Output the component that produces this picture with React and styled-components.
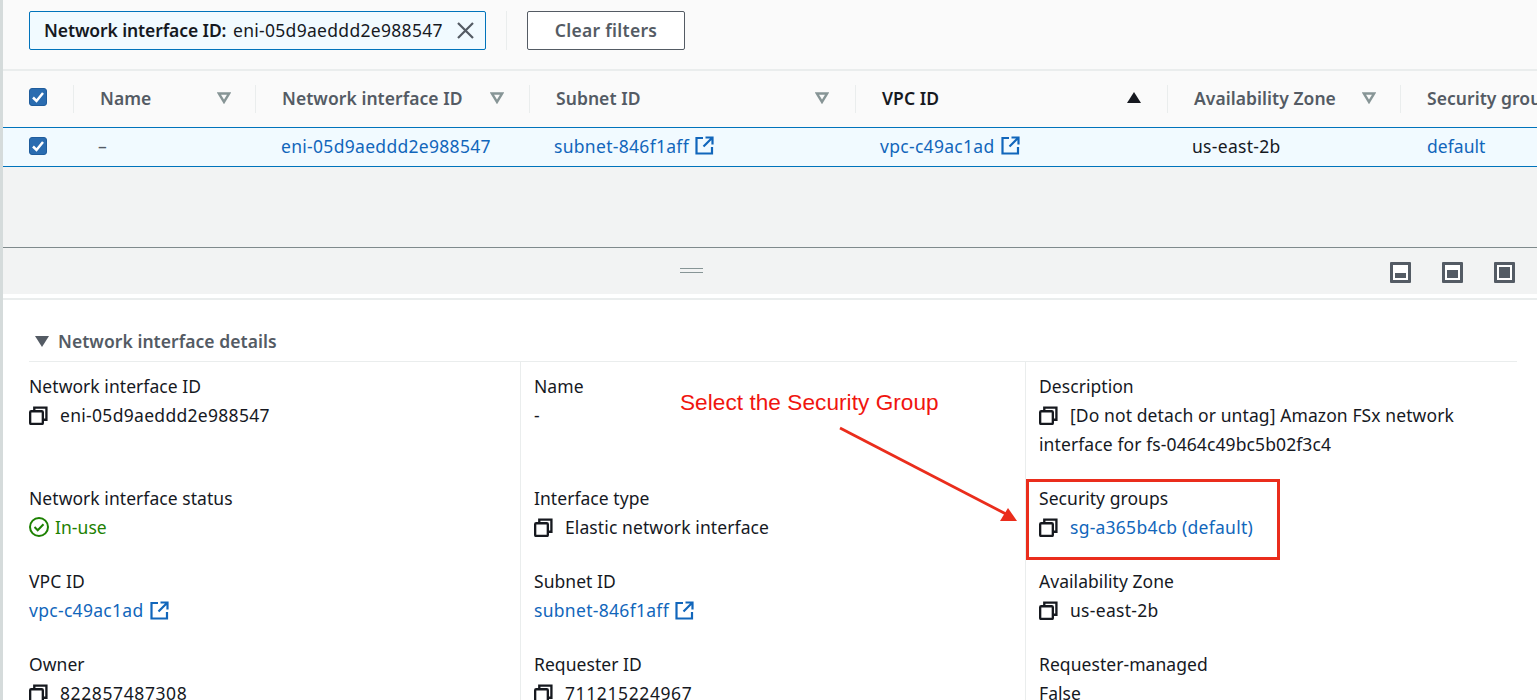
import styled, { createGlobalStyle } from "styled-components";

const GlobalStyle = createGlobalStyle`
  html, body {
    margin: 0;
    padding: 0;
    background: #fff;
  }
  * {
    box-sizing: border-box;
  }
`;

const Page = styled.div`
  position: relative;
  width: 1537px;
  height: 700px;
  overflow: hidden;
  border-left: 3px solid #d5dbdb;
  background: #fff;
  color: #16191f;
  font-family: "Noto Sans", "Open Sans", sans-serif;
  font-size: 17.5px;
  letter-spacing: 0.05px;
`;

const FilterBar = styled.div`
  height: 71px;
  padding: 0 0 9px 26px;
  display: flex;
  align-items: center;
  background: #fafafa;
  border-bottom: 2px solid #eaeded;
`;

const Token = styled.div`
  width: 457px;
  height: 39px;
  padding: 0 10px 0 14px;
  display: flex;
  align-items: center;
  justify-content: space-between;
  background: #f1faff;
  border: 1px solid #0073bb;
  border-radius: 2px;
  white-space: nowrap;
  b {
    font-weight: 600;
    margin-right: 2px;
    letter-spacing: -0.1px;
  }
`;

const FilterDivider = styled.div`
  width: 1px;
  height: 39px;
  margin: 0 20px;
  background: #eaeded;
`;

const ClearButton = styled.button`
  width: 158px;
  height: 39px;
  padding: 0;
  background: #fff;
  border: 1px solid #545b64;
  border-radius: 2px;
  color: #545b64;
  font: 600 17.5px "Noto Sans", sans-serif;
  letter-spacing: 0.3px;
`;

const columns = "70px 182px 274px 326px 312px 233px 1fr";

const HeaderRow = styled.div`
  height: 56px;
  display: grid;
  grid-template-columns: ${columns};
  background: #fafafa;
  align-items: center;
`;

const HeadCell = styled.div`
  height: 28px;
  padding: 0 ${(p) => p.$right ?? 24}px 3px 26px;
  display: flex;
  align-items: center;
  justify-content: space-between;
  border-left: 1px solid #eaeded;
  color: ${(p) => (p.$active ? "#16191f" : "#545b64")};
  font-weight: 600;
  white-space: nowrap;
  overflow: ${(p) => (p.$clip ? "hidden" : "visible")};
`;

const HeadCheck = styled.div`
  padding-bottom: 4px;
`;

const DataRow = styled.div`
  height: 40px;
  padding-bottom: 3px;
  display: grid;
  grid-template-columns: ${columns};
  align-items: center;
  background: #f1faff;
  border-top: 1px solid #0073bb;
  border-bottom: 1px solid #0073bb;
  box-shadow: 0 1px 1px #879596;
  white-space: nowrap;
`;

const DataCell = styled.div`
  padding-left: ${(p) => p.$left ?? 25}px;
  display: flex;
  align-items: center;
  gap: 6px;
  color: ${(p) => (p.$muted ? "#545b64" : "inherit")};
`;

const CheckBox = styled.span`
  margin-left: 26px;
  width: 18px;
  height: 18px;
  display: flex;
  align-items: center;
  justify-content: center;
  background: #2a6cb0;
  border: 1px solid #1f5c9c;
  border-radius: 3px;
`;

const Link = styled.a`
  display: inline-flex;
  align-items: center;
  gap: 6px;
  color: #1166bb;
`;

const Id = styled.span`
  letter-spacing: ${(p) => p.$sp ?? 0.3}px;
`;

const EmptyArea = styled.div`
  height: 81px;
  background: #f2f3f3;
  border-bottom: 1px solid #7f8a8c;
`;

const SplitBar = styled.div`
  position: relative;
  height: 46px;
  margin-bottom: 4px;
  padding: 3px 22px 0 0;
  display: flex;
  align-items: center;
  justify-content: flex-end;
  gap: 31px;
  background: #f2f3f3;
`;

const Handle = styled.div`
  position: absolute;
  left: 677px;
  top: 20px;
  width: 23px;
  height: 5px;
  border-top: 1px solid #879596;
  border-bottom: 1px solid #879596;
`;

const PaneFrame = styled.span`
  width: 21px;
  height: 21px;
  padding: 2px;
  display: flex;
  align-items: flex-end;
  background: #fff;
  border: 3px solid #545b64;
  border-radius: 1px;
`;

const PaneFill = styled.span`
  display: block;
  width: 100%;
  height: ${(p) => p.$h}px;
  background: #545b64;
`;

const Details = styled.section`
  padding: 23px 20px 0 26px;
  border-top: 2px solid #eaeded;
`;

const SectionTitle = styled.h2`
  margin: 0;
  height: 39px;
  padding: 0 0 2px 6px;
  display: flex;
  align-items: center;
  gap: 9px;
  border-bottom: 1px solid #eaeded;
  color: #545b64;
  font-size: 17.5px;
  font-weight: 600;
  line-height: 28px;
`;

const FieldGrid = styled.div`
  display: grid;
  grid-template-columns: 491px 505px 1fr;
  margin-right: -20px;
`;

const FieldColumn = styled.div`
  height: 340px;
  padding: 10px 40px 0 ${(p) => (p.$first ? 0 : 13)}px;
  border-left: ${(p) => (p.$first ? "none" : "1px solid #eaeded")};
  display: grid;
  grid-template-rows: 112px 83px 83px 83px;
  align-content: start;
`;

const Label = styled.div`
  line-height: 29px;
`;

const Value = styled.div`
  line-height: 28.5px;
  color: ${(p) => (p.$ok ? "#1d8102" : "inherit")};
  svg {
    vertical-align: -3px;
    margin-right: 12px;
  }
  a svg {
    margin-right: 0;
  }
`;

const Note = styled.div`
  position: absolute;
  left: 677px;
  top: 389px;
  color: #f0150f;
  font-family: "Liberation Sans", Arial, sans-serif;
  font-size: 22.6px;
  line-height: 28px;
  white-space: nowrap;
`;

const ArrowSvg = styled.svg`
  position: absolute;
  left: 833px;
  top: 424px;
`;

const Highlight = styled.div`
  position: absolute;
  left: 1023px;
  top: 479px;
  width: 254px;
  height: 81px;
  border: 3px solid #ea2d1c;
`;

const Copy = () => (
  <svg width="19" height="19" viewBox="0 0 18 18" fill="none" stroke="#16191f" strokeWidth="2.2">
    <rect x="1.100" y="5" width="12" height="12" rx="1" />
    <path d="M5 5V1.500h11.500V13H13" />
  </svg>
);

const External = () => (
  <svg width="19" height="19" viewBox="0 0 19 19" fill="none" stroke="#1166bb" strokeWidth="2.2">
    <path d="M8 2H1.500v15.500h15.500V11" />
    <path d="M10.500 1.500h7V8.500M17 2L8.500 10.500" />
  </svg>
);

const Caret = () => (
  <svg width="14" height="12" viewBox="0 0 14 12" fill="none" stroke="#879596" strokeWidth="2.4">
    <path d="M1.800 1.500h10.400L7 10z" />
  </svg>
);

const CaretUp = () => (
  <svg width="14" height="11" viewBox="0 0 14 11" fill="#16191f">
    <path d="M7 0l7 11H0z" />
  </svg>
);

const Tick = () => (
  <svg width="14" height="14" viewBox="0 0 14 14" fill="none" stroke="#fff" strokeWidth="2.500">
    <path d="M2 7.500l3.500 3.500L12 3" />
  </svg>
);

const Close = () => (
  <svg width="19" height="19" viewBox="0 0 19 19" fill="none" stroke="#545b64" strokeWidth="2.200">
    <path d="M2 2l15 15M17 2L2 17" />
  </svg>
);

const StatusOk = () => (
  <svg width="20" height="20" viewBox="0 0 20 20" fill="none" stroke="#1d8102" strokeWidth="2" style={{ marginRight: 6 }}>
    <circle cx="10" cy="10" r="9" />
    <path d="M5.500 10l3.200 3.200 5.800-6" />
  </svg>
);

const SectionCaret = () => (
  <svg width="14" height="11" viewBox="0 0 14 11" fill="#545b64">
    <path d="M0 0h14L7 11z" />
  </svg>
);

const fields = [
  [
    ["Network interface ID", "copy", "eni-05d9aeddd2e988547", 0.3],
    ["Network interface status", "status", "In-use"],
    ["VPC ID", "link", "vpc-c49ac1ad", 0.3],
    ["Owner", "copy", "822857487308", 0.6],
  ],
  [
    ["Name", "plain", "-"],
    ["Interface type", "copy", "Elastic network interface", 0.1],
    ["Subnet ID", "link", "subnet-846f1aff", 0.3],
    ["Requester ID", "copy", "711215224967", 0.6],
  ],
  [
    ["Description", "copy", "[Do not detach or untag] Amazon FSx network interface for fs-0464c49bc5b02f3c4", 0.1],
    ["Security groups", "copylink", "sg-a365b4cb (default)", 0.25],
    ["Availability Zone", "copy", "us-east-2b", 0.3],
    ["Requester-managed", "plain", "False"],
  ],
];

const Field = ({ label, kind, text, sp }) => (
  <div>
    <Label>{label}</Label>
    {kind === "plain" && <Value>{text}</Value>}
    {kind === "copy" && (
      <Value>
        <Copy />
        <Id $sp={sp}>{text}</Id>
      </Value>
    )}
    {kind === "status" && (
      <Value $ok>
        <StatusOk />
        {text}
      </Value>
    )}
    {kind === "link" && (
      <Value>
        <Link>
          <Id $sp={sp}>{text}</Id>
          <External />
        </Link>
      </Value>
    )}
    {kind === "copylink" && (
      <Value>
        <Copy />
        <Link>
          <Id $sp={sp}>{text}</Id>
        </Link>
      </Value>
    )}
  </div>
);

const App = () => {
  return (
    <Page>
      <GlobalStyle />
      <FilterBar>
        <Token>
          <span>
            <b>Network interface ID:</b> <Id>eni-05d9aeddd2e988547</Id>
          </span>
          <Close />
        </Token>
        <FilterDivider />
        <ClearButton>Clear filters</ClearButton>
      </FilterBar>

      <HeaderRow>
        <HeadCheck>
          <CheckBox>
            <Tick />
          </CheckBox>
        </HeadCheck>
        <HeadCell>
          Name
          <Caret />
        </HeadCell>
        <HeadCell $right={25}>
          Network interface ID
          <Caret />
        </HeadCell>
        <HeadCell $right={26}>
          Subnet ID
          <Caret />
        </HeadCell>
        <HeadCell $active $right={26}>
          VPC ID
          <CaretUp />
        </HeadCell>
        <HeadCell>
          Availability Zone
          <Caret />
        </HeadCell>
        <HeadCell $clip $right={0}>
          Security groups
        </HeadCell>
      </HeaderRow>

      <DataRow>
        <CheckBox>
          <Tick />
        </CheckBox>
        <DataCell $muted>–</DataCell>
        <DataCell $left={26}>
          <Link>
            <Id>eni-05d9aeddd2e988547</Id>
          </Link>
        </DataCell>
        <DataCell>
          <Link>
            <Id>subnet-846f1aff</Id>
            <External />
          </Link>
        </DataCell>
        <DataCell>
          <Link>
            <Id>vpc-c49ac1ad</Id>
            <External />
          </Link>
        </DataCell>
        <DataCell>
          <Id>us-east-2b</Id>
        </DataCell>
        <DataCell $left={27}>
          <Link>default</Link>
        </DataCell>
      </DataRow>

      <EmptyArea />

      <SplitBar>
        <Handle />
        <PaneFrame>
          <PaneFill $h={5} />
        </PaneFrame>
        <PaneFrame>
          <PaneFill $h={8} />
        </PaneFrame>
        <PaneFrame>
          <PaneFill $h={11} />
        </PaneFrame>
      </SplitBar>

      <Details>
        <SectionTitle>
          <SectionCaret />
          Network interface details
        </SectionTitle>
        <FieldGrid>
          {fields.map((col, i) => (
            <FieldColumn key={i} $first={i === 0}>
              {col.map(([label, kind, text, sp]) => (
                <Field key={label} label={label} kind={kind} text={text} sp={sp} />
              ))}
            </FieldColumn>
          ))}
        </FieldGrid>
      </Details>

      <Note>Select the Security Group</Note>
      <ArrowSvg width="185" height="100" viewBox="0 0 185 100">
        <path d="M4 4L170 90" stroke="#ea2d1c" strokeWidth="2.800" />
        <path d="M164 97L181 97L172 84z" fill="#ea2d1c" />
      </ArrowSvg>
      <Highlight />
    </Page>
  );
};

export default App;
